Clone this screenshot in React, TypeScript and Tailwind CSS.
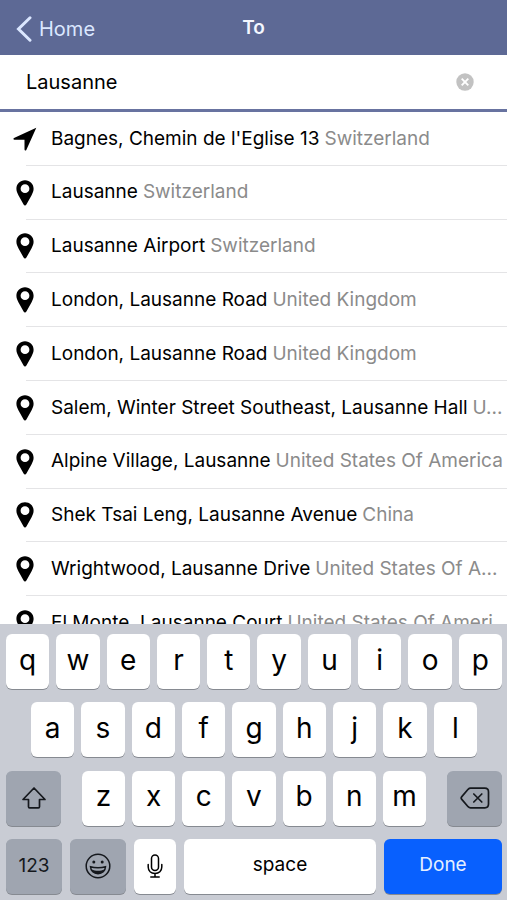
import { useState } from "react";
import type { ReactNode } from "react";

type Place = { name: string; country: string; current?: boolean };

const places: Place[] = [
  { name: "Bagnes, Chemin de l'Eglise 13", country: "Switzerland", current: true },
  { name: "Lausanne", country: "Switzerland" },
  { name: "Lausanne Airport", country: "Switzerland" },
  { name: "London, Lausanne Road", country: "United Kingdom" },
  { name: "London, Lausanne Road", country: "United Kingdom" },
  { name: "Salem, Winter Street Southeast, Lausanne Hall", country: "U..." },
  { name: "Alpine Village, Lausanne", country: "United States Of America" },
  { name: "Shek Tsai Leng, Lausanne Avenue", country: "China" },
  { name: "Wrightwood, Lausanne Drive", country: "United States Of A..." },
  { name: "El Monte, Lausanne Court", country: "United States Of Ameri..." },
];

function PinIcon() {
  return (
    <svg viewBox="0 0 18 26" className="h-[26px] w-[18px]" aria-hidden="true">
      <path
        fillRule="evenodd"
        d="M9 0.3C4.1 0.3 0.4 4 0.4 8.7c0 2.3.9 4.200 2 6.500L7.600 24.600c.6 1.200 2.200 1.200 2.800 0l5.200-9.400c1.100-2.300 2-4.200 2-6.500C17.600 4 13.900.3 9 .3zM9 4.300a4.400 4.400 0 1 1 0 8.800a4.400 4.400 0 0 1 0-8.800z"
      />
    </svg>
  );
}

function ArrowIcon() {
  return (
    <svg viewBox="0 0 24 24" className="size-6" aria-hidden="true">
      <path d="M23.300.700 13.300 22.900c-.4.900-1.800.7-1.800-.3V12.700H1.400C.3 12.700.1 11.500 1 11.100z" />
    </svg>
  );
}

function ShiftIcon() {
  return (
    <svg viewBox="0 0 26 24" className="h-6 w-[26px]" fill="none" stroke="currentColor" strokeWidth="1.700" strokeLinejoin="round" aria-hidden="true">
      <path d="M13 2 2 13.500h5.500v7.200c0 .7.400 1.100 1.100 1.100h8.800c.7 0 1.100-.4 1.100-1.100v-7.200H24z" />
    </svg>
  );
}

function BackspaceIcon() {
  return (
    <svg viewBox="0 0 30 22" className="h-[22px] w-[30px]" fill="none" stroke="currentColor" strokeWidth="1.700" strokeLinecap="round" strokeLinejoin="round" aria-hidden="true">
      <path d="M10.500 1.200h14.300c2.300 0 3.700 1.400 3.700 3.700v12.200c0 2.300-1.400 3.700-3.700 3.700H10.500c-1 0-1.700-.4-2.400-1.100L1.800 12.400c-.8-.9-.8-1.900 0-2.800l6.300-7.300c.7-.7 1.400-1.100 2.400-1.100z" />
      <path d="m13.800 7 8 8m0-8-8 8" />
    </svg>
  );
}

function EmojiIcon() {
  return (
    <svg viewBox="0 0 26 26" className="size-[26px]" fill="none" stroke="currentColor" strokeWidth="1.500" aria-hidden="true">
      <circle cx="13" cy="13" r="11.800" />
      <circle cx="8.800" cy="9" r="1.500" fill="currentColor" stroke="none" />
      <circle cx="17.200" cy="9" r="1.500" fill="currentColor" stroke="none" />
      <path d="M5.500 13.700c2.300.8 4.800 1.100 7.500 1.100s5.200-.3 7.500-1.100c-.2 4.100-3.300 7-7.500 7s-7.300-2.900-7.500-7z" />
      <path d="M6.500 16.500c2 .9 4.200 1.200 6.500 1.200s4.500-.3 6.500-1.200c-1.100 2.500-3.500 4.200-6.500 4.200s-5.400-1.700-6.500-4.200z" fill="currentColor" stroke="none" />
    </svg>
  );
}

function MicIcon() {
  return (
    <svg viewBox="0 0 16 24" className="h-6 w-4" fill="none" stroke="currentColor" strokeWidth="1.500" strokeLinecap="round" aria-hidden="true">
      <rect x="4.500" y="1" width="7" height="15.500" rx="3.500" />
      <path d="M1.200 10.500v2.600c0 3.900 2.800 6.300 6.800 6.300s6.800-2.400 6.800-6.300v-2.600M8 19.400v3.300M3.800 22.900h8.400" />
    </svg>
  );
}

function Key({ label, tone = "light", className, onPress, children }: {
  label: string;
  tone?: "light" | "dark" | "blue";
  className: string;
  onPress: () => void;
  children: ReactNode;
}) {
  const tones = {
    light: "bg-white text-black",
    dark: "bg-[#9fa5b0] text-[#15181d]",
    blue: "bg-[#0860fe] text-[#e6efff]",
  };
  return (
    <button
      type="button"
      aria-label={label}
      onClick={onPress}
      className={`flex h-[55px] items-center justify-center rounded-md shadow-[0_1px_0_#868a91] ${tones[tone]} ${className}`}
    >
      {children}
    </button>
  );
}

function LetterKeys({ letters, onType }: { letters: string; onType: (text: string) => void }) {
  return letters.split("").map((letter) => (
    <Key key={letter} label={letter} className="min-w-0 flex-1 pb-1 text-[28px]" onPress={() => onType(letter)}>
      {letter}
    </Key>
  ));
}

export default function App() {
  const [query, setQuery] = useState("Lausanne");
  const type = (text: string) => setQuery((value) => value + text);
  const nothing = () => undefined;

  return (
    <div className="flex h-screen flex-col overflow-hidden bg-white font-['Inter',sans-serif] text-[19px] text-black">
      <header className="grid h-[55px] shrink-0 grid-cols-3 items-center bg-[#5d6995] px-4 pt-[2px]">
        <a href="#home" className="flex items-center gap-[7px] justify-self-start text-[20px] text-[#dbe7ff]">
          <svg viewBox="0 0 16 26" className="h-[26px] w-4" fill="none" stroke="currentColor" strokeWidth="3" strokeLinecap="round" aria-hidden="true">
            <path d="M14 1.800 2.500 13 14 24.200" />
          </svg>
          Home
        </a>
        <h1 className="justify-self-center font-semibold text-[#f3f7ff]">To</h1>
      </header>

      <div className="flex h-[57px] shrink-0 items-center border-b-3 border-[#6873a0] pr-[33px] pl-[26px]">
        <input
          type="text"
          aria-label="Destination"
          value={query}
          onChange={(event) => setQuery(event.target.value)}
          className="min-w-0 flex-1 text-[20px] outline-none"
        />
        <button type="button" aria-label="Clear text" onClick={() => setQuery("")}>
          <svg viewBox="0 0 18 18" className="size-[18px]" aria-hidden="true">
            <circle cx="9" cy="9" r="8.700" fill="#c2c2c2" />
            <path d="m5.700 5.700 6.600 6.600m0-6.600-6.600 6.600" stroke="#fff" strokeWidth="1.900" />
          </svg>
        </button>
      </div>

      <main className="min-h-0 flex-1 overflow-hidden">
        <ul className="grid h-[538px] auto-rows-fr">
          {places.map((place, index) => (
            <li key={index} className="flex min-w-0">
              <a href="#place" className="flex min-w-0 flex-1 bg-[linear-gradient(#e4e4e6,#e4e4e6)] bg-[length:calc(100%-26px)_1px] bg-right-bottom bg-no-repeat">
                <span className="flex w-[50px] shrink-0 items-center justify-center">
                  {place.current ? <ArrowIcon /> : <PinIcon />}
                </span>
                <span className="flex min-w-0 flex-1 items-center gap-[5px] pl-px whitespace-nowrap">
                  <span>{place.name}</span>
                  <span className="text-[#8b8b8b]">{place.country}</span>
                </span>
              </a>
            </li>
          ))}
        </ul>
      </main>

      <section aria-label="Keyboard" className="flex h-[276px] shrink-0 flex-col justify-between bg-[#c9ccd4] pt-[10px] pr-[5px] pb-[6px] pl-[6px]">
        <div className="flex gap-[7px]">
          <LetterKeys letters="qwertyuiop" onType={type} />
        </div>
        <div className="flex gap-[7px] px-[25px]">
          <LetterKeys letters="asdfghjkl" onType={type} />
        </div>
        <div className="flex gap-[21px]">
          <Key label="Shift" tone="dark" className="w-[55px] shrink-0" onPress={nothing}>
            <ShiftIcon />
          </Key>
          <div className="flex min-w-0 flex-1 gap-[7px]">
            <LetterKeys letters="zxcvbnm" onType={type} />
          </div>
          <Key label="Delete" tone="dark" className="w-[55px] shrink-0" onPress={() => setQuery((value) => value.slice(0, -1))}>
            <BackspaceIcon />
          </Key>
        </div>
        <div className="flex gap-2">
          <Key label="123" tone="dark" className="w-14 shrink-0" onPress={nothing}>123</Key>
          <Key label="Emoji" tone="dark" className="w-14 shrink-0" onPress={nothing}>
            <EmojiIcon />
          </Key>
          <Key label="Dictate" className="w-[42px] shrink-0" onPress={nothing}>
            <MicIcon />
          </Key>
          <Key label="space" className="min-w-0 flex-1 pb-[2px]" onPress={() => type(" ")}>space</Key>
          <Key label="Done" tone="blue" className="w-[118px] shrink-0 pb-[2px]" onPress={nothing}>Done</Key>
        </div>
      </section>
    </div>
  );
}
